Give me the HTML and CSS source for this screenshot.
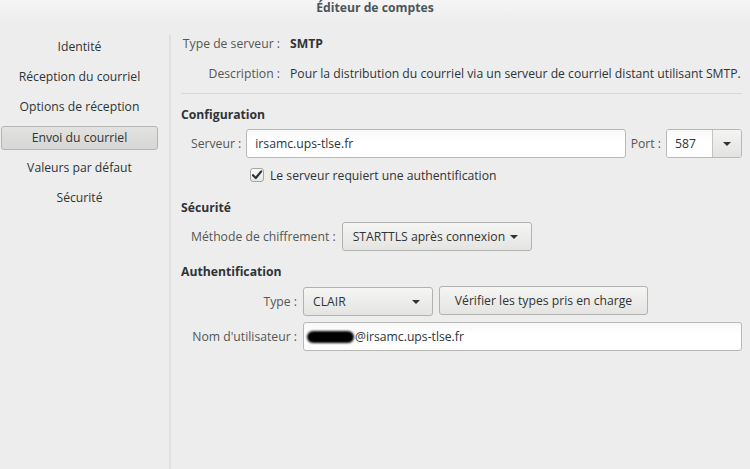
FILE: index.html
```html
<!DOCTYPE html>
<html lang="fr">
<head>
<meta charset="utf-8">
<title>Éditeur de comptes</title>
<link rel="stylesheet" href="styles.css">
</head>
<body>
<div class="window">
  <header class="titlebar">Éditeur de comptes</header>
  <div class="layout">
    <nav class="sidebar">
      <div class="nav-item">Identité</div>
      <div class="nav-item">Réception du courriel</div>
      <div class="nav-item">Options de réception</div>
      <div class="nav-item selected">Envoi du courriel</div>
      <div class="nav-item">Valeurs par défaut</div>
      <div class="nav-item">Sécurité</div>
    </nav>
    <main class="content">
      <div class="info-row row1">
        <span class="info-label">Type de serveur :</span>
        <span class="info-value bold">SMTP</span>
      </div>
      <div class="info-row row2">
        <span class="info-label">Description :</span>
        <span class="info-value">Pour la distribution du courriel via un serveur de courriel distant utilisant SMTP.</span>
      </div>
      <div class="separator"></div>

      <div class="section-title sec-config">Configuration</div>
      <div class="form-row server-row">
        <span class="label">Serveur :</span>
        <div class="entry grow">irsamc.ups-tlse.fr</div>
        <span class="label port-label">Port :</span>
        <div class="combo-entry">
          <span class="combo-text">587</span>
          <span class="combo-btn"><span class="arrow"></span></span>
        </div>
      </div>
      <div class="check-row">
        <span class="checkbox">
          <svg width="12" height="12" viewBox="0 0 12 12"><path d="M2 6.2 L4.8 9 L10.2 2.4" fill="none" stroke="#2e3436" stroke-width="2.2" stroke-linecap="round" stroke-linejoin="round"/></svg>
        </span>
        <span class="check-text">Le serveur requiert une authentification</span>
      </div>

      <div class="section-title sec-secu">Sécurité</div>
      <div class="form-row method-row">
        <span class="label">Méthode de chiffrement :</span>
        <div class="button combo method-combo">STARTTLS après connexion <span class="arrow"></span></div>
      </div>

      <div class="section-title sec-auth">Authentification</div>
      <div class="auth-grid">
        <span class="label right">Type :</span>
        <div class="type-controls">
          <div class="button combo type-combo"><span>CLAIR</span><span class="arrow"></span></div>
          <div class="button verify-btn">Vérifier les types pris en charge</div>
        </div>
        <span class="label right">Nom d'utilisateur :</span>
        <div class="entry"><span class="redacted"></span>@irsamc.ups-tlse.fr</div>
      </div>
    </main>
  </div>
</div>
</body>
</html>
```

FILE: styles.css
```css
* { box-sizing: border-box; }
html, body { margin: 0; padding: 0; }
body {
  background: #ededed;
  font-family: "Open Sans", "Noto Sans", "DejaVu Sans", sans-serif;
  font-size: 12.2px;
  color: #2e3436;
}
.window {
  width: 750px;
  height: 469px;
  overflow: hidden;
  display: flex;
  flex-direction: column;
}
.titlebar {
  height: 22px;
  flex-shrink: 0;
  background: linear-gradient(#f5f5f5, #ededed);
  text-align: center;
  font-weight: bold;
  color: #4b565b;
  line-height: 16px;
}
.layout {
  flex: 1;
  display: flex;
  padding-top: 12px;
}
.sidebar {
  width: 171px;
  flex-shrink: 0;
  border-right: 2px solid #e1e1e1;
  padding: 1px 11px 0 1px;
  display: flex;
  flex-direction: column;
  gap: 6.2px;
}
.nav-item {
  height: 24px;
  line-height: 22px;
  text-align: center;
  border: 1px solid transparent;
  border-radius: 3px;
  color: #2e3436;
}
.nav-item.selected {
  background: linear-gradient(#e2e2e0, #d6d6d4);
  border-color: #b4b4b2;
}
.content {
  flex: 1;
  min-width: 0;
  padding: 0 8px 0 10px;
  display: flex;
  flex-direction: column;
}
.info-row {
  display: grid;
  grid-template-columns: 99px 1fr;
  column-gap: 10px;
  height: 20px;
  line-height: 20px;
  white-space: nowrap;
}
.row2 { margin-top: 10px; }
.info-label { text-align: right; color: #555753; }
.info-value { color: #2e3436; }
.bold { font-weight: bold; }
.separator {
  height: 1px;
  background: #d8d8d6;
  margin-top: 9px;
}
.section-title {
  font-weight: bold;
  height: 20px;
  line-height: 20px;
}
.sec-config { margin-top: 11px; }
.sec-secu { margin-top: 13px; }
.sec-auth { margin-top: 11px; }
.form-row {
  display: flex;
  align-items: center;
  padding-left: 10px;
}
.server-row { margin-top: 4px; gap: 5px; }
.method-row { margin-top: 4px; gap: 6px; }
.label { color: #555753; white-space: nowrap; }
.label.right { text-align: right; }
.entry {
  height: 29px;
  line-height: 27px;
  border: 1px solid #b8b8b5;
  border-radius: 3px;
  background: linear-gradient(#f8f8f8, #ffffff 40%);
  padding: 0 8px;
  color: #2e3436;
  white-space: nowrap;
  display: flex;
  align-items: center;
}
.grow { flex: 1; }
.combo-entry {
  width: 76px;
  height: 29px;
  display: flex;
  border: 1px solid #b8b8b5;
  border-radius: 3px;
  overflow: hidden;
}
.combo-text {
  width: 46px;
  background: linear-gradient(#f8f8f8, #ffffff 40%);
  line-height: 27px;
  padding-left: 8px;
  border-right: 1px solid #c4c4c2;
}
.combo-btn {
  flex: 1;
  background: linear-gradient(#f4f4f3, #e3e3e1);
  display: flex;
  align-items: center;
  justify-content: center;
}
.arrow {
  display: inline-block;
  width: 0;
  height: 0;
  border-left: 4px solid transparent;
  border-right: 4px solid transparent;
  border-top: 4px solid #2e3436;
}
.check-row {
  margin-top: 7px;
  height: 20px;
  display: flex;
  align-items: center;
  padding-left: 69px;
  gap: 6px;
}
.checkbox {
  width: 14px;
  height: 14px;
  border: 1px solid #a6a6a4;
  border-radius: 3px;
  background: linear-gradient(#fbfbfb, #e6e6e5);
  display: flex;
  align-items: center;
  justify-content: center;
}
.button {
  height: 29px;
  border: 1px solid #b2b2b0;
  border-radius: 3px;
  background: linear-gradient(#f5f5f4, #e4e4e2);
  display: flex;
  align-items: center;
  color: #2e3436;
  white-space: nowrap;
}
.method-combo {
  width: 190px;
  padding: 0 10px;
  gap: 5px;
}
.auth-grid {
  margin-top: 5px;
  padding-left: 10px;
  display: grid;
  grid-template-columns: 106px 1fr;
  column-gap: 6px;
  row-gap: 6px;
  align-items: center;
}
.type-controls {
  display: flex;
  gap: 6px;
}
.type-combo {
  width: 130px;
  padding: 0 12px 0 9px;
  justify-content: space-between;
}
.verify-btn {
  width: 209px;
  justify-content: center;
  margin-top: -1px;
}
.auth-grid .entry { padding-left: 3px; }
.redacted {
  display: inline-block;
  width: 47px;
  height: 12px;
  background: #000;
  border-radius: 6px;
  filter: blur(0.8px);
  margin-right: 1px;
}
```
